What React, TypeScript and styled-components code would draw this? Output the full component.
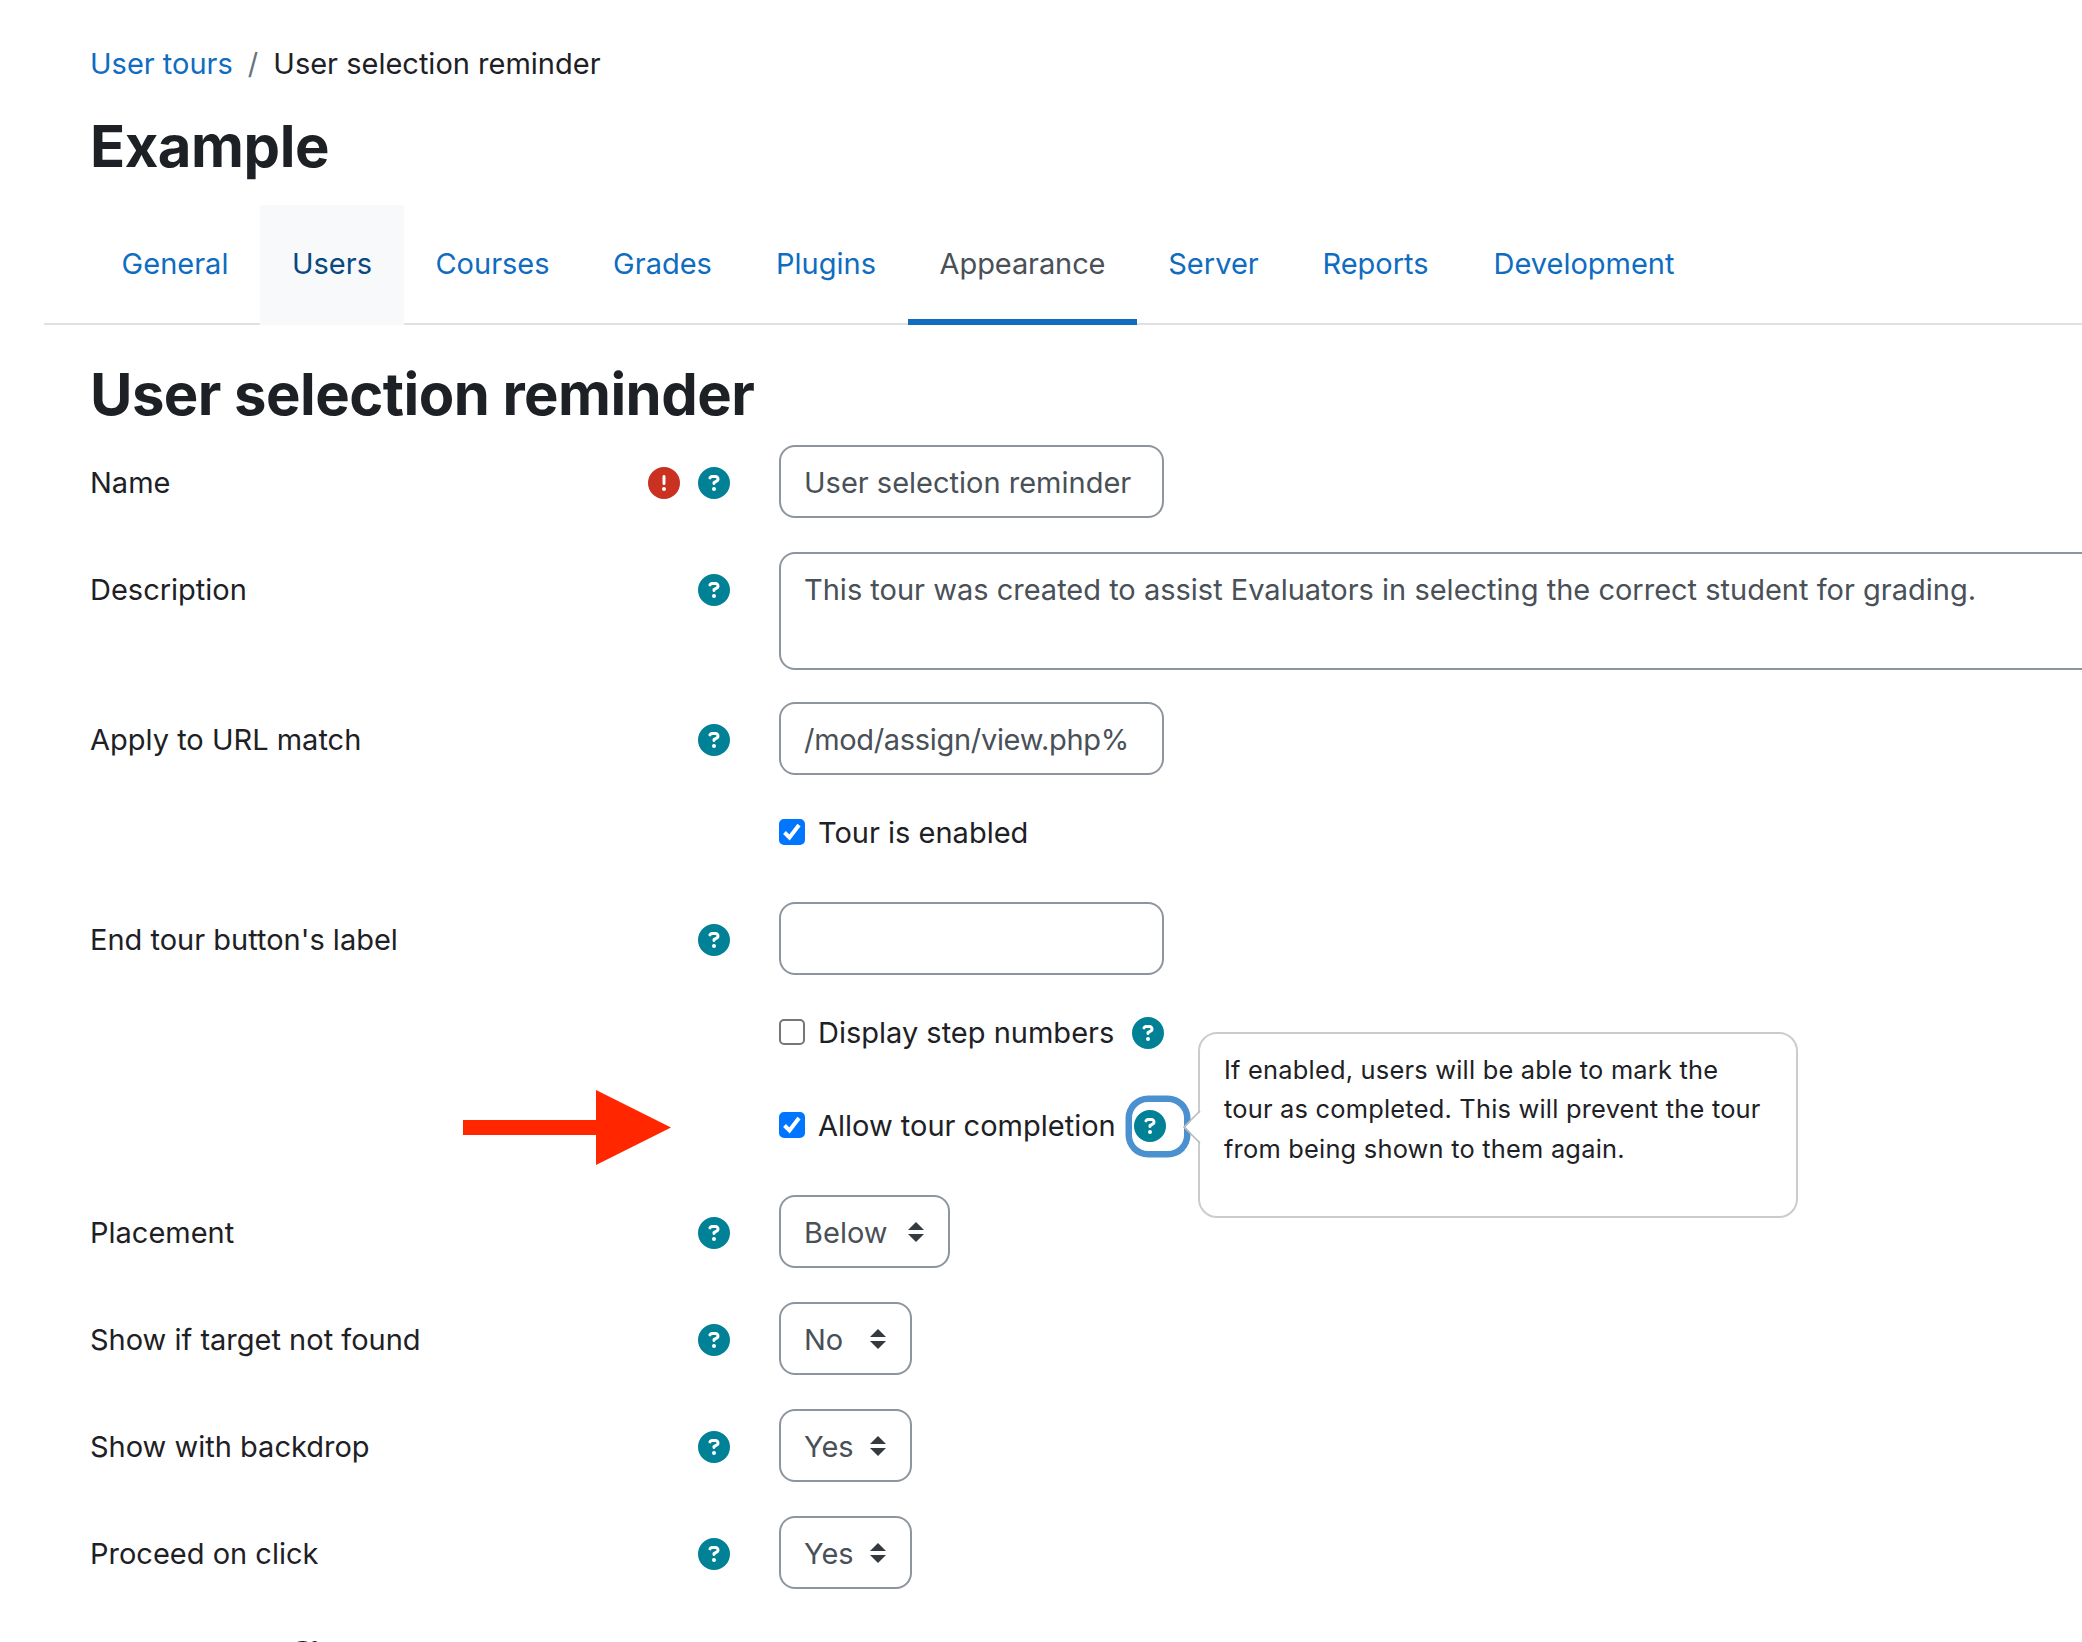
import React from "react";
import styled, { createGlobalStyle, css } from "styled-components";
import { FaCircleExclamation, FaCircleQuestion } from "react-icons/fa6";

const GlobalStyle = createGlobalStyle`
  * {
    box-sizing: border-box;
  }

  body {
    margin: 0;
    background: #fff;
    color: #1d2125;
    font-family: Inter, "Liberation Sans", sans-serif;
    font-size: 29px;
    line-height: 45px;
    overflow: hidden;
  }
`;

const ScPage = styled.div`
  height: 1642px;
  padding-left: 44px;
  overflow: hidden;
`;

const ScBreadcrumb = styled.nav`
  display: flex;
  padding: 41px 0 0 46px;
  white-space: nowrap;

  a {
    color: #0f6cbf;
    text-decoration: none;
  }
`;

const ScSlash = styled.span`
  padding: 0 15px;
  color: #6a737b;
`;

const ScTitle = styled.h1`
  margin: 24px 0 0 46px;
  font-size: 58px;
  font-weight: 700;
  line-height: 72px;
  letter-spacing: -0.45px;
  white-space: nowrap;
`;

const ScTabs = styled.nav`
  display: flex;
  height: 120px;
  margin-top: 23px;
  padding-left: 46px;
  box-shadow: inset 0 -2px #dee2e6;
`;

const ScTab = styled.a<{ $width: number; $state?: "hover" | "active" }>`
  width: ${(p) => p.$width}px;
  padding-top: 36px;
  text-align: center;
  white-space: nowrap;
  color: #0f6cbf;

  ${(p) =>
    p.$state === "hover" &&
    css`
      color: #0a4880;
      background: #f8f9fa;
    `}

  ${(p) =>
    p.$state === "active" &&
    css`
      color: #495057;
      border-bottom: 6px solid #0f6cbf;
      letter-spacing: -0.1px;
    `}
`;

const ScForm = styled.form`
  padding-left: 46px;
`;

const ScHeading = styled.h2`
  margin: 33px 0 15px;
  font-size: 58px;
  font-weight: 700;
  line-height: 72px;
  letter-spacing: -0.55px;
  white-space: nowrap;
`;

const ScRow = styled.div<{ $height?: number }>`
  display: grid;
  grid-template-columns: 640px 49px 1fr;
  align-items: start;
  height: ${(p) => p.$height || 107}px;
`;

const ScLabel = styled.div`
  display: flex;
  justify-content: space-between;
  padding-top: 15px;
  white-space: nowrap;
`;

const ScIcons = styled.span`
  display: flex;
  gap: 18px;
  padding-top: 7px;
`;

const ScHelp = styled(FaCircleQuestion)`
  display: block;
  flex: none;
  width: 32px;
  height: 32px;
  color: #008196;
`;

const ScRequired = styled(FaCircleExclamation)`
  display: block;
  width: 32px;
  height: 32px;
  color: #ca3120;
`;

const ScControl = styled.div`
  grid-column: 3;
`;

const control = css`
  display: block;
  border: 2px solid #8f959e;
  border-radius: 16px;
  background: #fff;
  color: #495057;
  font: inherit;
  outline: none;
`;

const ScInput = styled.input<{ $tight?: boolean }>`
  ${control}
  width: 385px;
  height: 73px;
  padding: 1px 23px 0;
  letter-spacing: ${(p) => (p.$tight ? "-0.32px" : "normal")};
`;

const ScTextarea = styled.textarea`
  ${control}
  width: 1400px;
  height: 118px;
  padding: 13px 23px;
  line-height: 45px;
  overflow: hidden;
  resize: none;
`;

const ScSelect = styled.div<{ $width: number }>`
  ${control}
  display: flex;
  align-items: center;
  justify-content: space-between;
  width: ${(p) => p.$width}px;
  height: 73px;
  padding: 1px 24px 0 23px;

  svg {
    width: 16px;
    height: 20px;
    fill: #343a40;
  }
`;

const ScCheck = styled.div`
  position: relative;
  display: flex;
  align-items: center;
  height: 45px;
  margin-top: 1px;
  white-space: nowrap;
`;

const ScBox = styled.span<{ $checked?: boolean }>`
  flex: none;
  width: 26px;
  height: 26px;
  margin: -1px 13px 0 0;
  border: 2px solid ${(p) => (p.$checked ? "#0075ff" : "#767676")};
  border-radius: 5px;
  background: ${(p) => (p.$checked ? "#0075ff" : "#fff")};

  svg {
    display: block;
    width: 22px;
    height: 22px;
    fill: none;
    stroke: #fff;
    stroke-width: 4;
  }
`;

const ScCheckText = styled.span`
  width: 299px;
`;

const ScHelpButton = styled.span<{ $focus?: boolean }>`
  margin-left: 15px;

  ${(p) =>
    p.$focus &&
    css`
      width: 52px;
      height: 49px;
      margin-top: 2px;
      padding: 8px 0 0 2px;
      border-radius: 16px;
      box-shadow: 0 0 0 6.5px #4b91cf;
    `}
`;

const ScPopover = styled.div`
  position: absolute;
  z-index: 1;
  left: 419px;
  top: -71px;
  width: 600px;
  height: 186px;
  padding: 16px 24px;
  border: 2px solid #ccc;
  border-radius: 19px;
  background: #fff;
  font-size: 25.4px;
  line-height: 39.4px;
  letter-spacing: 0.22px;

  svg {
    position: absolute;
    left: -17px;
    top: 76px;
    width: 18px;
    height: 34px;
  }
`;

const ScArrow = styled.svg`
  position: absolute;
  left: -316px;
  top: -13px;
  width: 208px;
  height: 75px;
  fill: #ff2600;
`;

const ScFilters = styled.h3`
  margin: 9px 0 0 74px;
  font-size: 51px;
  font-weight: 700;
  line-height: 60px;
  letter-spacing: -0.5px;
`;

const tabs: { name: string; width: number; state?: "hover" | "active" }[] = [
  { name: "General", width: 170 },
  { name: "Users", width: 144, state: "hover" },
  { name: "Courses", width: 177 },
  { name: "Grades", width: 163 },
  { name: "Plugins", width: 164 },
  { name: "Appearance", width: 229, state: "active" },
  { name: "Server", width: 153 },
  { name: "Reports", width: 171 },
  { name: "Development", width: 246 },
];

const selects = [
  { label: "Placement", value: "Below", width: 171 },
  { label: "Show if target not found", value: "No", width: 133 },
  { label: "Show with backdrop", value: "Yes", width: 133 },
  { label: "Proceed on click", value: "Yes", width: 133 },
];

type PtFieldProps = {
  label: string;
  required?: boolean;
  height?: number;
  children: React.ReactNode;
};

const Field = ({ label, required, height, children }: PtFieldProps) => (
  <ScRow $height={height}>
    <ScLabel>
      <span>{label}</span>
      <ScIcons>
        {required ? <ScRequired /> : null}
        <ScHelp />
      </ScIcons>
    </ScLabel>
    <ScControl>{children}</ScControl>
  </ScRow>
);

const Checkbox = ({ checked }: { checked?: boolean }) => (
  <ScBox $checked={checked}>
    {checked ? (
      <svg viewBox="0 0 22 22">
        <path d="M3.5 11.5l5 5L18 4" />
      </svg>
    ) : null}
  </ScBox>
);

const App = () => {
  return (
    <ScPage>
      <GlobalStyle />
      <ScBreadcrumb>
        <a>User tours</a>
        <ScSlash>/</ScSlash>
        <span>User selection reminder</span>
      </ScBreadcrumb>
      <ScTitle>Example</ScTitle>
      <ScTabs>
        {tabs.map((tab) => (
          <ScTab key={tab.name} $width={tab.width} $state={tab.state}>
            {tab.name}
          </ScTab>
        ))}
      </ScTabs>
      <ScForm>
        <ScHeading>User selection reminder</ScHeading>
        <Field label="Name" required>
          <ScInput defaultValue="User selection reminder" />
        </Field>
        <Field label="Description" height={150}>
          <ScTextarea defaultValue="This tour was created to assist Evaluators in selecting the correct student for grading." />
        </Field>
        <Field label="Apply to URL match">
          <ScInput $tight defaultValue="/mod/assign/view.php%" />
        </Field>
        <ScRow $height={93}>
          <ScControl>
            <ScCheck>
              <Checkbox checked />
              <span>Tour is enabled</span>
            </ScCheck>
          </ScControl>
        </ScRow>
        <Field label="End tour button's label">
          <ScInput />
        </Field>
        <ScRow $height={93}>
          <ScControl>
            <ScCheck>
              <Checkbox />
              <ScCheckText>Display step numbers</ScCheckText>
              <ScHelpButton>
                <ScHelp />
              </ScHelpButton>
            </ScCheck>
          </ScControl>
        </ScRow>
        <ScRow $height={93}>
          <ScControl>
            <ScCheck>
              <ScArrow viewBox="0 0 208 75">
                <path d="M0 30h133V0l75 37.5L133 75V45H0z" />
              </ScArrow>
              <Checkbox checked />
              <ScCheckText>Allow tour completion</ScCheckText>
              <ScHelpButton $focus>
                <ScHelp />
              </ScHelpButton>
              <ScPopover>
                <svg viewBox="0 0 18 34">
                  <path d="M18 1L2 17l16 16" fill="#fff" />
                  <path d="M17 1L1 17l16 16" fill="none" stroke="#bbb" strokeWidth="1.6" />
                </svg>
                If enabled, users will be able to mark the
                <br />
                tour as completed. This will prevent the tour
                <br />
                from being shown to them again.
              </ScPopover>
            </ScCheck>
          </ScControl>
        </ScRow>
        {selects.map((item) => (
          <Field key={item.label} label={item.label}>
            <ScSelect $width={item.width}>
              {item.value}
              <svg viewBox="0 0 4 5">
                <path d="M2 0L0 2h4zm0 5L0 3h4z" />
              </svg>
            </ScSelect>
          </Field>
        ))}
        <ScFilters>Tour filters</ScFilters>
      </ScForm>
    </ScPage>
  );
};

export default App;
